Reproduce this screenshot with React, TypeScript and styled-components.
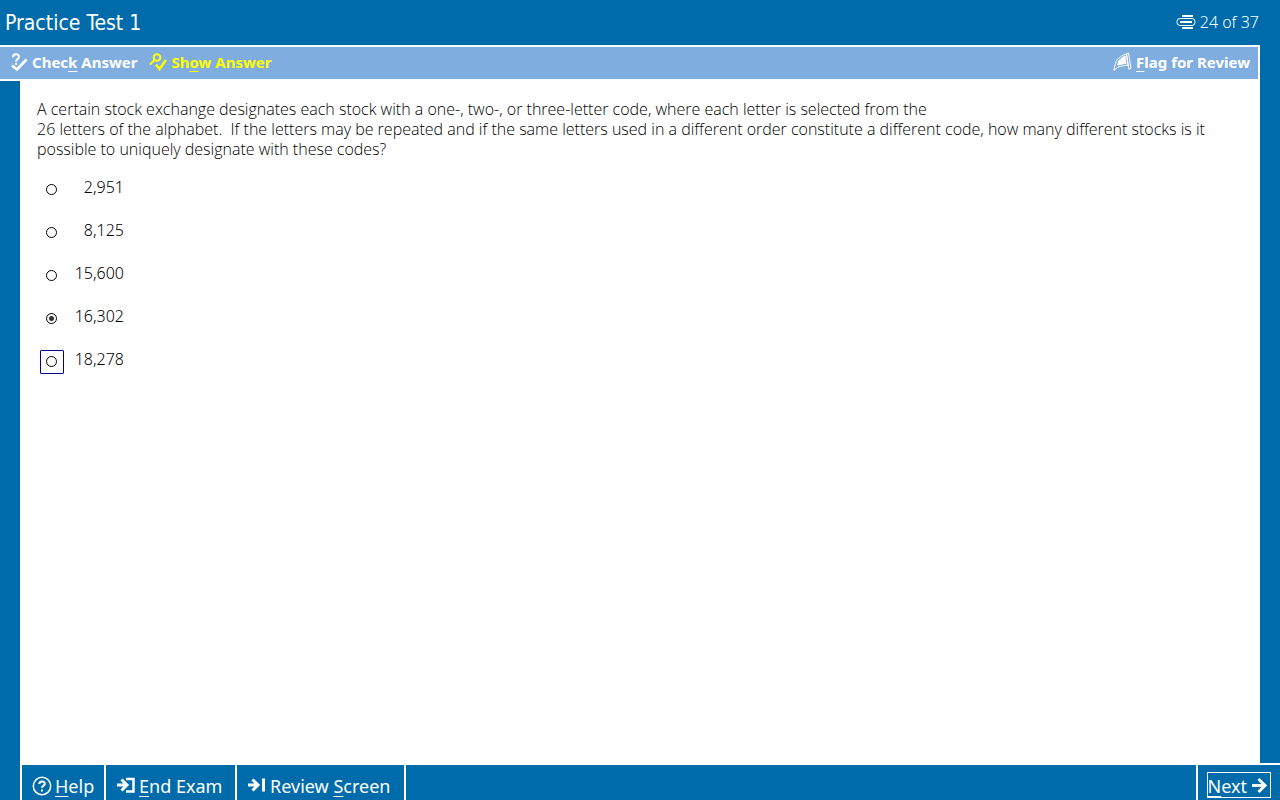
import React, { useState } from 'react';
import styled, { createGlobalStyle } from 'styled-components';

const BLUE = '#006bab';
const LIGHT = '#80ade0';

const GlobalStyle = createGlobalStyle`
  *, *::before, *::after { box-sizing: border-box; }
  body {
    margin: 0;
    background: ${BLUE};
    font-family: "Noto Sans", "Open Sans", Tahoma, sans-serif;
  }
`;

const Page = styled.div`
  display: flex;
  flex-direction: column;
  min-height: 100vh;
  background: ${BLUE};
`;

const Header = styled.header`
  display: flex;
  align-items: center;
  justify-content: space-between;
  height: 45px;
  padding: 0 21px 0 5px;
  color: #fff;
`;

const Title = styled.h1`
  margin: 0;
  font-family: "DejaVu Sans Condensed", "Noto Sans", sans-serif;
  font-size: 21px;
  font-weight: 400;
  line-height: 28px;
`;

const Progress = styled.div`
  display: flex;
  align-items: center;
  gap: 4px;
  padding-bottom: 2px;
  font-size: 16px;
  font-weight: 350;
  line-height: 22px;
`;

const Toolbar = styled.nav`
  display: flex;
  align-items: center;
  gap: 12px;
  height: 36px;
  margin-right: 20px;
  padding: 0 8px 2px 10px;
  background: ${LIGHT};
  border: solid #fff;
  border-width: 2px 2px 2px 0;
`;

const ToolButton = styled.button<{ $color?: string; $end?: boolean }>`
  display: flex;
  align-items: center;
  gap: 4px;
  margin-left: ${p => (p.$end ? 'auto' : '0')};
  padding: 0;
  border: 0;
  background: none;
  color: ${p => p.$color ?? '#fff'};
  font: 700 15px/20px "Noto Sans", sans-serif;
  cursor: pointer;
`;

const Key = styled.span`
  text-decoration: underline 1px;
  text-underline-offset: 3px;
  text-decoration-skip-ink: none;
`;

const Main = styled.main`
  flex: 1;
  margin: 0 20px;
  padding: 18px 24px 24px 17px;
  background: #fff;
  color: #000;
`;

const Question = styled.p`
  margin: 0 0 19px;
  font-family: "Open Sans", "Noto Sans", sans-serif;
  font-size: 16px;
  font-weight: 300;
  line-height: 20px;
  white-space: pre-wrap;
`;

const Answers = styled.fieldset`
  display: flex;
  flex-direction: column;
  align-items: flex-start;
  gap: 19px;
  margin: 0;
  padding: 0 0 0 3px;
  border: 0;
`;

const Answer = styled.label`
  display: flex;
  align-items: flex-start;
  gap: 10px;
`;

const RadioFrame = styled.span<{ $active: boolean }>`
  display: flex;
  width: 24px;
  height: 24px;
  padding: 5px;
  border: 1px solid ${p => (p.$active ? '#00008b' : 'transparent')};
  border-radius: 1px;
`;

const Radio = styled.input`
  appearance: none;
  flex: none;
  width: 11px;
  height: 11px;
  margin: 0;
  border: 1px solid #000;
  border-radius: 50%;
  background: #fff;
  outline: none;
  &:checked {
    background: radial-gradient(circle, #333 0 2px, #fff 3px);
  }
`;

const AnswerText = styled.span`
  width: 50px;
  font-size: 16px;
  font-weight: 350;
  line-height: 18px;
  text-align: right;
`;

const Footer = styled.footer`
  display: flex;
  height: 37px;
  margin-left: 20px;
  border-top: 2px solid #fff;
  border-left: 2px solid #fff;
  background: ${BLUE};
`;

const FooterButton = styled.button<{ $width?: number }>`
  display: flex;
  align-items: center;
  gap: 3px;
  width: ${p => (p.$width ? `${p.$width}px` : 'auto')};
  padding: 7px 0 0 10px;
  border: 0;
  border-right: 2px solid #fff;
  background: none;
  color: #fff;
  font: 400 18px/24px "Noto Sans", sans-serif;
  white-space: nowrap;
  cursor: pointer;
`;

const NextButton = styled(FooterButton)`
  margin-left: auto;
  padding: 5px 9px 0;
  border-right: 0;
  border-left: 2px solid #fff;
`;

const NextFrame = styled.span`
  display: flex;
  align-items: center;
  gap: 5px;
  height: 26px;
  padding: 1px 2px 0 0;
  border: 1px solid #fff;
`;

const Icon = styled.svg`
  display: block;
  flex: none;
  fill: none;
  stroke: currentColor;
`;

const CheckIcon = () => (
  <Icon width="18" height="20" viewBox="0 0 18 20" strokeWidth="2">
    <path d="M3 5.200C3 1.200 9 1.200 9 4.800C9 7.200 6 7 6 9.800" />
    <path d="M2 13.500L7 17.500L16.500 7.500" strokeWidth="2.600" />
    <path d="M5 12h2" />
  </Icon>
);

const ShowIcon = () => (
  <Icon width="18" height="20" viewBox="0 0 18 20" strokeWidth="2">
    <circle cx="8" cy="5.500" r="3.300" />
    <path d="M5.500 8L1 12.500" />
    <path d="M7 12.500L10.500 17L17 8" strokeWidth="2.500" />
  </Icon>
);

const FlagIcon = () => (
  <Icon width="19" height="20" viewBox="0 0 19 20" strokeWidth="1">
    <path d="M4.500 7C7 6 9 2.500 13.500 2L15 13.500C11 12.500 8 15 5 15L1 18.500C1.500 14 2.500 10 4.500 7Z" />
    <path d="M6 8.500C8 7.500 10 4.500 12 4L13 11.500C10 11 8 13 4.500 13Z" fill="currentColor" />
    <path d="M13.500 1.500L15.500 1L18 16L16 17.500Z" />
  </Icon>
);

const ProgressIcon = () => (
  <Icon width="20" height="16" viewBox="0 0 20 16">
    <path d="M6 2h11M6 14h11" strokeWidth="2" />
    <rect x="1" y="4.500" width="18" height="7" rx="3" />
    <path d="M4 8h12" strokeWidth="2" />
  </Icon>
);

const HelpIcon = () => (
  <Icon width="20" height="20" viewBox="0 0 20 20">
    <circle cx="10" cy="10" r="8.700" strokeWidth="1.500" />
    <path d="M7.300 8C7.300 4.500 12.800 4.700 12.800 7.700C12.800 9.700 10 9.500 10 12" strokeWidth="2" />
    <path d="M10 13.500v2" strokeWidth="2" />
  </Icon>
);

const EndIcon = () => (
  <Icon width="20" height="18" viewBox="0 0 20 18" strokeWidth="3">
    <path d="M1 8h10M5.500 2.500L11 8L5.500 13.500" />
    <path d="M10 2h7.500v12.500h-7.500" strokeWidth="2.500" />
  </Icon>
);

const ReviewIcon = () => (
  <Icon width="20" height="18" viewBox="0 0 20 18" strokeWidth="3">
    <path d="M1 8h10M5.500 2.500L11 8L5.500 13.500" />
    <path d="M16.500 1.500v13" />
  </Icon>
);

const NextIcon = () => (
  <Icon width="16" height="18" viewBox="0 0 16 18" strokeWidth="3">
    <path d="M0 8.500h13M6.500 2L13 8.500L6.500 15" />
  </Icon>
);

const answers = ['2,951', '8,125', '15,600', '16,302', '18,278'];

export default function App() {
  const [selected, setSelected] = useState('16,302');
  const [active, setActive] = useState('18,278');

  return (
    <Page>
      <GlobalStyle />
      <Header>
        <Title>Practice Test 1</Title>
        <Progress><ProgressIcon />24 of 37</Progress>
      </Header>
      <Toolbar>
        <ToolButton><CheckIcon /><span>Chec<Key>k</Key> Answer</span></ToolButton>
        <ToolButton $color="#ffff00"><ShowIcon /><span>Sh<Key>o</Key>w Answer</span></ToolButton>
        <ToolButton $end><FlagIcon /><span><Key>F</Key>lag for Review</span></ToolButton>
      </Toolbar>
      <Main>
        <Question id="question">
          A certain stock exchange designates each stock with a one-, two-, or three-letter code, where each letter is selected from the
          <br />
          {'26 letters of the alphabet.  If the letters may be repeated and if the same letters used in a different order constitute a different code, how many different stocks is it possible to uniquely designate with these codes?'}
        </Question>
        <Answers aria-labelledby="question">
          {answers.map(value => (
            <Answer key={value}>
              <RadioFrame $active={active === value}>
                <Radio
                  type="radio"
                  name="answer"
                  value={value}
                  checked={selected === value}
                  onFocus={() => setActive(value)}
                  onChange={() => setSelected(value)}
                />
              </RadioFrame>
              <AnswerText>{value}</AnswerText>
            </Answer>
          ))}
        </Answers>
      </Main>
      <Footer>
        <FooterButton $width={84}><HelpIcon /><span><Key>H</Key>elp</span></FooterButton>
        <FooterButton $width={131}><EndIcon /><span><Key>E</Key>nd Exam</span></FooterButton>
        <FooterButton $width={169}><ReviewIcon /><span>Review <Key>S</Key>creen</span></FooterButton>
        <NextButton><NextFrame><span><Key>N</Key>ext</span><NextIcon /></NextFrame></NextButton>
      </Footer>
    </Page>
  );
}
